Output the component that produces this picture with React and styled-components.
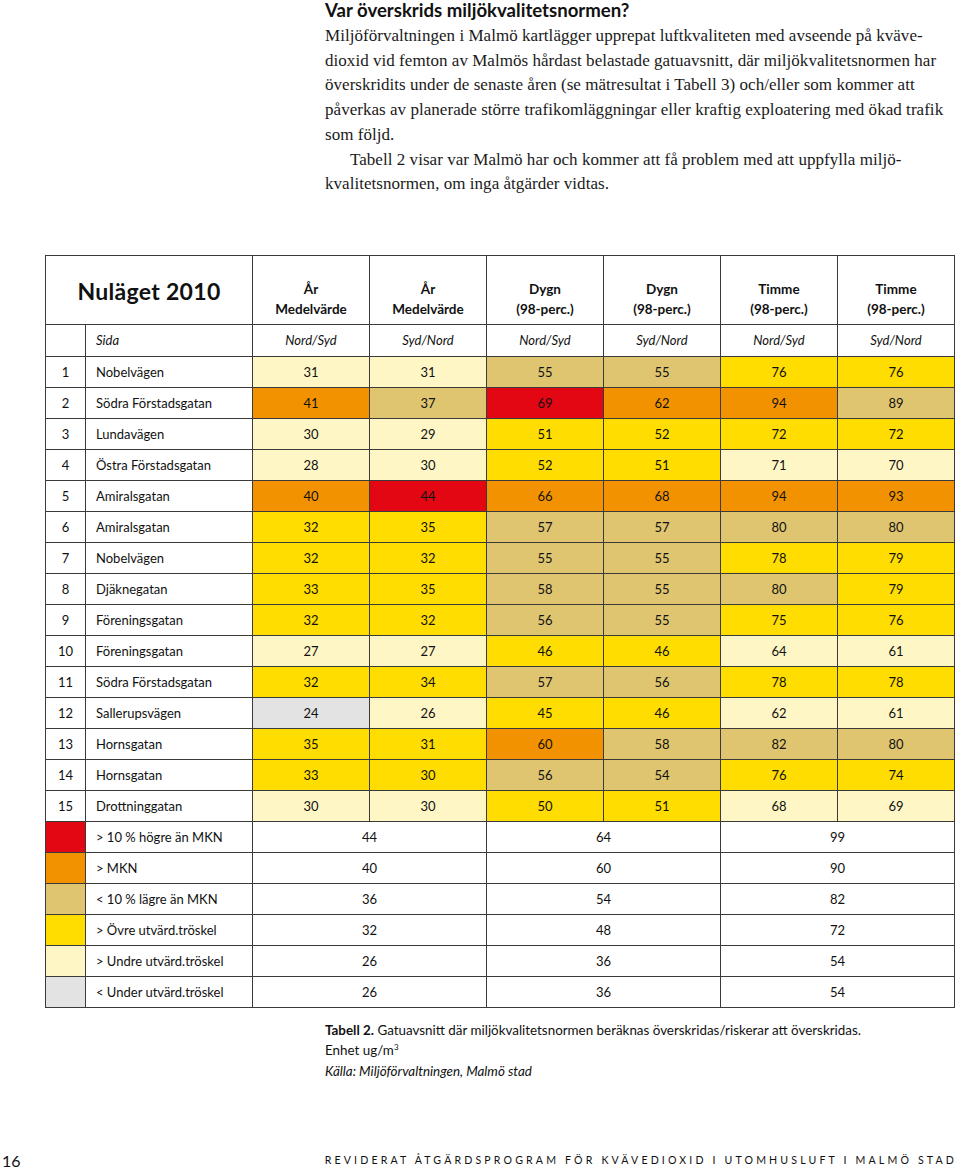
import React from 'react';
import styled, { createGlobalStyle } from 'styled-components';

const GlobalStyle = createGlobalStyle`
  html, body {
    margin: 0;
    padding: 0;
    background: #fff;
    color: #111;
  }
`;

const COLORS = {
  r: '#e30613',
  o: '#f39200',
  t: '#dfc570',
  y: '#ffdd00',
  p: '#fff6c6',
  g: '#e3e3e3',
};

const rows = [
  ['Nobelvägen', [31, 'p'], [31, 'p'], [55, 't'], [55, 't'], [76, 'y'], [76, 'y']],
  ['Södra Förstadsgatan', [41, 'o'], [37, 't'], [69, 'r'], [62, 'o'], [94, 'o'], [89, 't']],
  ['Lundavägen', [30, 'p'], [29, 'p'], [51, 'y'], [52, 'y'], [72, 'y'], [72, 'y']],
  ['Östra Förstadsgatan', [28, 'p'], [30, 'p'], [52, 'y'], [51, 'y'], [71, 'p'], [70, 'p']],
  ['Amiralsgatan', [40, 'o'], [44, 'r'], [66, 'o'], [68, 'o'], [94, 'o'], [93, 'o']],
  ['Amiralsgatan', [32, 'y'], [35, 'y'], [57, 't'], [57, 't'], [80, 't'], [80, 't']],
  ['Nobelvägen', [32, 'y'], [32, 'y'], [55, 't'], [55, 't'], [78, 'y'], [79, 'y']],
  ['Djäknegatan', [33, 'y'], [35, 'y'], [58, 't'], [55, 't'], [80, 't'], [79, 'y']],
  ['Föreningsgatan', [32, 'y'], [32, 'y'], [56, 't'], [55, 't'], [75, 'y'], [76, 'y']],
  ['Föreningsgatan', [27, 'p'], [27, 'p'], [46, 'y'], [46, 'y'], [64, 'p'], [61, 'p']],
  ['Södra Förstadsgatan', [32, 'y'], [34, 'y'], [57, 't'], [56, 't'], [78, 'y'], [78, 'y']],
  ['Sallerupsvägen', [24, 'g'], [26, 'p'], [45, 'y'], [46, 'y'], [62, 'p'], [61, 'p']],
  ['Hornsgatan', [35, 'y'], [31, 'y'], [60, 'o'], [58, 't'], [82, 't'], [80, 't']],
  ['Hornsgatan', [33, 'y'], [30, 'y'], [56, 't'], [54, 't'], [76, 'y'], [74, 'y']],
  ['Drottninggatan', [30, 'p'], [30, 'p'], [50, 'y'], [51, 'y'], [68, 'p'], [69, 'p']],
];

const legend = [
  ['r', '> 10 % högre än MKN', 44, 64, 99],
  ['o', '> MKN', 40, 60, 90],
  ['t', '< 10 % lägre än MKN', 36, 54, 82],
  ['y', '> Övre utvärd.tröskel', 32, 48, 72],
  ['p', '> Undre utvärd.tröskel', 26, 36, 54],
  ['g', '< Under utvärd.tröskel', 26, 36, 54],
];

const heads = [
  ['År', 'Medelvärde', 'Nord/Syd'],
  ['År', 'Medelvärde', 'Syd/Nord'],
  ['Dygn', '(98-perc.)', 'Nord/Syd'],
  ['Dygn', '(98-perc.)', 'Syd/Nord'],
  ['Timme', '(98-perc.)', 'Nord/Syd'],
  ['Timme', '(98-perc.)', 'Syd/Nord'],
];

const Page = styled.div`
  width: 960px;
  height: 1169px;
  display: flex;
  flex-direction: column;
  font-family: 'Lato', 'Open Sans', sans-serif;
`;

const TextColumn = styled.section`
  padding-left: 325px;
  padding-right: 4px;
`;

const Heading = styled.h2`
  margin: 0;
  font-family: 'Lato', sans-serif;
  font-weight: 700;
  font-size: 18.6px;
  line-height: 20px;
  color: #111;
`;

const Body = styled.p`
  margin: 4px 0 0;
  font-family: 'Liberation Serif', 'DejaVu Serif', serif;
  font-size: 17px;
  letter-spacing: 0.04px;
  line-height: 24.7px;
  color: #1a1a1a;
`;

const Line = styled.span`
  display: block;
  white-space: nowrap;
  text-indent: ${(p) => (p.$indent ? '25px' : '0')};
`;

const TableWrap = styled.div`
  margin: 58px 0 0 45px;
  width: 910px;
`;

const Table = styled.table`
  border-collapse: collapse;
  width: 910px;
  table-layout: fixed;
  font-family: 'Lato', sans-serif;
  font-size: 13px;
  color: #111;
  border: 1px solid #555;
`;

const Cell = styled.td`
  border: 1px solid #3a3a3a;
  height: 30px;
  padding: 0;
  text-align: ${(p) => (p.$left ? 'left' : 'center')};
  padding-left: ${(p) => (p.$left ? '10px' : '0')};
  background: ${(p) => (p.$bg ? COLORS[p.$bg] : '#fff')};
  vertical-align: middle;
  white-space: nowrap;
`;

const HeadCell = styled.th`
  border: 1px solid #3a3a3a;
  height: 63px;
  padding: 0 0 5px;
  vertical-align: bottom;
  font-weight: 700;
  font-size: 13.5px;
  line-height: 20px;
  background: #fff;
`;

const Title = styled.th`
  border: 1px solid #3a3a3a;
  height: 63px;
  padding: 3px 0 0;
  font-size: 23px;
  font-weight: 700;
  vertical-align: middle;
  letter-spacing: 0.3px;
  background: #fff;
`;

const SubCell = styled(Cell)`
  font-style: italic;
  height: 31px;
`;

const Caption = styled.div`
  margin: 12px 0 0 325px;
  font-family: 'Lato', sans-serif;
  font-size: 13.4px;
  line-height: 20.5px;
  color: #111;

  b {
    font-weight: 700;
  }
  i {
    display: block;
  }
  sup {
    font-size: 8px;
    vertical-align: 5px;
    line-height: 0;
  }
`;

const Footer = styled.footer`
  margin-top: auto;
  height: 18px;
  padding: 0 3px 0 2px;
  display: flex;
  align-items: center;
  justify-content: space-between;
  font-family: 'Lato', sans-serif;
  color: #111;
`;

const PageNo = styled.span`
  font-size: 16px;
`;

const RunningHead = styled.span`
  font-size: 10.6px;
  letter-spacing: 3.15px;
  text-transform: uppercase;
`;

export default function App() {
  return (
    <Page>
      <GlobalStyle />
      <TextColumn>
        <Heading>Var överskrids miljökvalitetsnormen?</Heading>
        <Body>
          <Line>Miljöförvaltningen i Malmö kartlägger upprepat luftkvaliteten med avseende på kväve-</Line>
          <Line>dioxid vid femton av Malmös hårdast belastade gatuavsnitt, där miljökvalitetsnormen har</Line>
          <Line>överskridits under de senaste åren (se mätresultat i Tabell 3) och/eller som kommer att</Line>
          <Line>påverkas av planerade större trafikomläggningar eller kraftig exploatering med ökad trafik</Line>
          <Line>som följd.</Line>
          <Line $indent>Tabell 2 visar var Malmö har och kommer att få problem med att uppfylla miljö-</Line>
          <Line>kvalitetsnormen, om inga åtgärder vidtas.</Line>
        </Body>
      </TextColumn>

      <TableWrap>
        <Table>
          <colgroup>
            <col style={{ width: 40 }} />
            <col style={{ width: 167 }} />
            {heads.map((_, i) => (
              <col key={i} />
            ))}
          </colgroup>
          <thead>
            <tr>
              <Title colSpan={2}>Nuläget 2010</Title>
              {heads.map((h, i) => (
                <HeadCell key={i}>
                  {h[0]}
                  <br />
                  {h[1]}
                </HeadCell>
              ))}
            </tr>
          </thead>
          <tbody>
            <tr>
              <SubCell />
              <SubCell $left>Sida</SubCell>
              {heads.map((h, i) => (
                <SubCell key={i}>{h[2]}</SubCell>
              ))}
            </tr>
            {rows.map((r, i) => (
              <tr key={i}>
                <Cell>{i + 1}</Cell>
                <Cell $left>{r[0]}</Cell>
                {r.slice(1).map(([v, c], j) => (
                  <Cell key={j} $bg={c}>
                    {v}
                  </Cell>
                ))}
              </tr>
            ))}
            {legend.map((l, i) => (
              <tr key={'l' + i}>
                <Cell $bg={l[0]} />
                <Cell $left>{l[1]}</Cell>
                <Cell colSpan={2}>{l[2]}</Cell>
                <Cell colSpan={2}>{l[3]}</Cell>
                <Cell colSpan={2}>{l[4]}</Cell>
              </tr>
            ))}
          </tbody>
        </Table>
      </TableWrap>

      <Caption>
        <b>Tabell 2.</b> Gatuavsnitt där miljökvalitetsnormen beräknas överskridas/riskerar att överskridas.
        <br />
        Enhet ug/m<sup>3</sup>
        <i>Källa: Miljöförvaltningen, Malmö stad</i>
      </Caption>

      <Footer>
        <PageNo>16</PageNo>
        <RunningHead>Reviderat åtgärdsprogram för kvävedioxid i utomhusluft i Malmö stad</RunningHead>
      </Footer>
    </Page>
  );
}
